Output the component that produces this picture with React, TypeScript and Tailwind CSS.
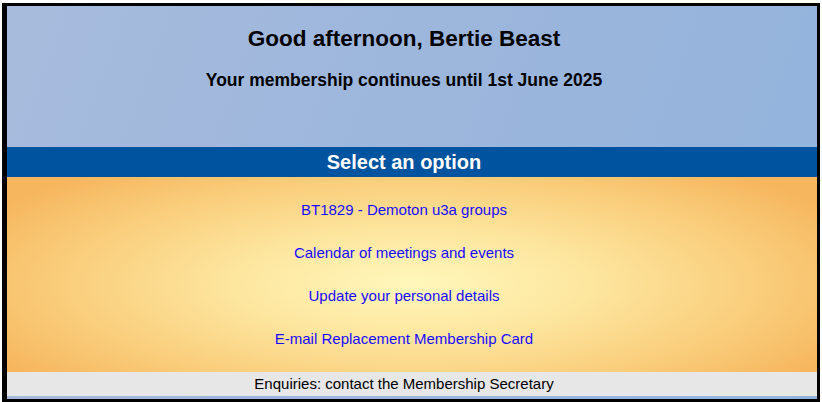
const LINKS = [
  'BT1829 - Demoton u3a groups',
  'Calendar of meetings and events',
  'Update your personal details',
  'E-mail Replacement Membership Card',
];

export default function App() {
  return (
    <div className="h-[402px] w-[822px] overflow-hidden bg-white pl-[2px] pr-[2px] pt-[3px] font-['Liberation_Sans',Arial,sans-serif]">
      <div className="h-[399px] border-[3px] border-b-[3px] border-l-[5px] border-black bg-[linear-gradient(110deg,#a7bcdd_0%,#9db6dc_45%,#92b3dc_100%)]">
        <div className="flex h-[141px] flex-col items-center pr-[16px] pt-[20px] text-black">
          <h1 className="text-[22.5px] font-bold leading-[25px]">Good afternoon, Bertie Beast</h1>
          <p className="mt-[19px] text-[17.5px] font-bold leading-[21px]">
            Your membership continues until 1st June 2025
          </p>
        </div>
        <div className="flex h-[30px] items-center justify-center bg-[#00539f] pr-[16px] text-[20px] font-bold leading-[30px] text-white">
          Select an option
        </div>
        <div className="flex h-[195px] flex-col items-center gap-[26px] bg-[radial-gradient(ellipse_60%_75%_at_50%_55%,#fff7bb_0%,#fde7a0_35%,#f9cb78_75%,#f6b65e_100%)] pr-[16px] pt-[24px]">
          {LINKS.map((label) => (
            <a key={label} href="#" className="text-[15px] leading-[17px] text-[#1a0bff]">
              {label}
            </a>
          ))}
        </div>
        <div className="flex h-[24px] items-center justify-center bg-[#e7e7e7] pr-[16px] text-[15px] text-black">
          Enquiries: contact the Membership Secretary
        </div>
      </div>
    </div>
  );
}
